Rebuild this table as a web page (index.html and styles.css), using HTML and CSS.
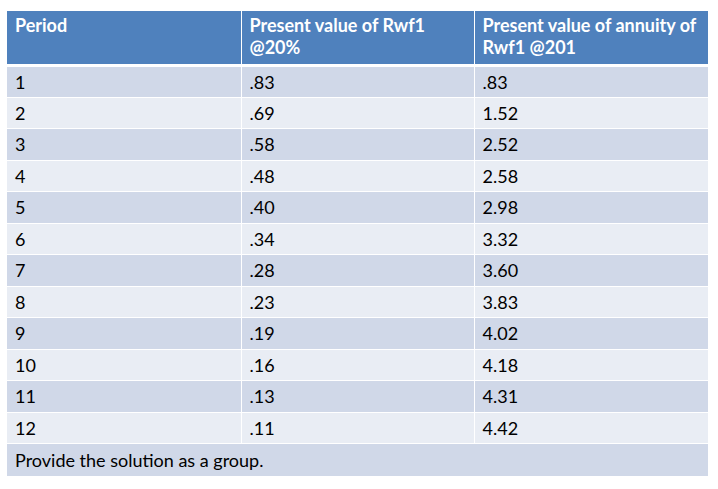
FILE: index.html
```html
<!DOCTYPE html>
<html>
<head>
<meta charset="utf-8">
<link rel="stylesheet" href="styles.css">
</head>
<body>
<table class="pv-table">
  <colgroup>
    <col class="c1"><col class="c2"><col class="c3">
  </colgroup>
  <thead>
    <tr class="head">
      <th>Period</th>
      <th>Present value of Rwf1 @20%</th>
      <th>Present value of annuity of Rwf1 @201</th>
    </tr>
  </thead>
  <tbody>
    <tr class="dark"><td>1</td><td>.83</td><td>.83</td></tr>
    <tr class="light"><td>2</td><td>.69</td><td>1.52</td></tr>
    <tr class="dark"><td>3</td><td>.58</td><td>2.52</td></tr>
    <tr class="light"><td>4</td><td>.48</td><td>2.58</td></tr>
    <tr class="dark"><td>5</td><td>.40</td><td>2.98</td></tr>
    <tr class="light"><td>6</td><td>.34</td><td>3.32</td></tr>
    <tr class="dark"><td>7</td><td>.28</td><td>3.60</td></tr>
    <tr class="light"><td>8</td><td>.23</td><td>3.83</td></tr>
    <tr class="dark"><td>9</td><td>.19</td><td>4.02</td></tr>
    <tr class="light"><td>10</td><td>.16</td><td>4.18</td></tr>
    <tr class="dark"><td>11</td><td>.13</td><td>4.31</td></tr>
    <tr class="light"><td>12</td><td>.11</td><td>4.42</td></tr>
    <tr class="dark foot"><td colspan="3">Provide the solution as a group.</td></tr>
  </tbody>
</table>
</body>
</html>
```

FILE: styles.css
```css
html, body {
  margin: 0;
  padding: 0;
  background: #ffffff;
}
body {
  padding: 11px 0 0 7px;
}
.pv-table {
  border-collapse: collapse;
  table-layout: fixed;
  width: 701px;
  font-family: Lato, "Liberation Sans", sans-serif;
  font-size: 18px;
  color: #000000;
}
.c1 { width: 234px; }
.c2 { width: 233px; }
.c3 { width: 234px; }
.pv-table th,
.pv-table td {
  border: 1px solid #ffffff;
  text-align: left;
  padding: 0 8px;
}
.pv-table tr:first-child th { border-top: 0; }
.pv-table th:first-child,
.pv-table td:first-child { border-left: 0; }
.pv-table th:last-child,
.pv-table td:last-child { border-right: 0; }
.head th {
  background: #4f81bd;
  color: #ffffff;
  font-weight: bold;
  line-height: 22px;
  vertical-align: top;
  padding-top: 3px;
  height: 54px;
  box-sizing: border-box;
  border-bottom: 3px solid #ffffff;
}
.pv-table td {
  box-sizing: border-box;
  line-height: 22px;
  vertical-align: middle;
}
.dark td {
  background: #d0d8e8;
  height: 32px;
}
.light td {
  background: #e9edf4;
  height: 31px;
}
.foot td {
  height: 33px;
  border-bottom: 0;
}
```
